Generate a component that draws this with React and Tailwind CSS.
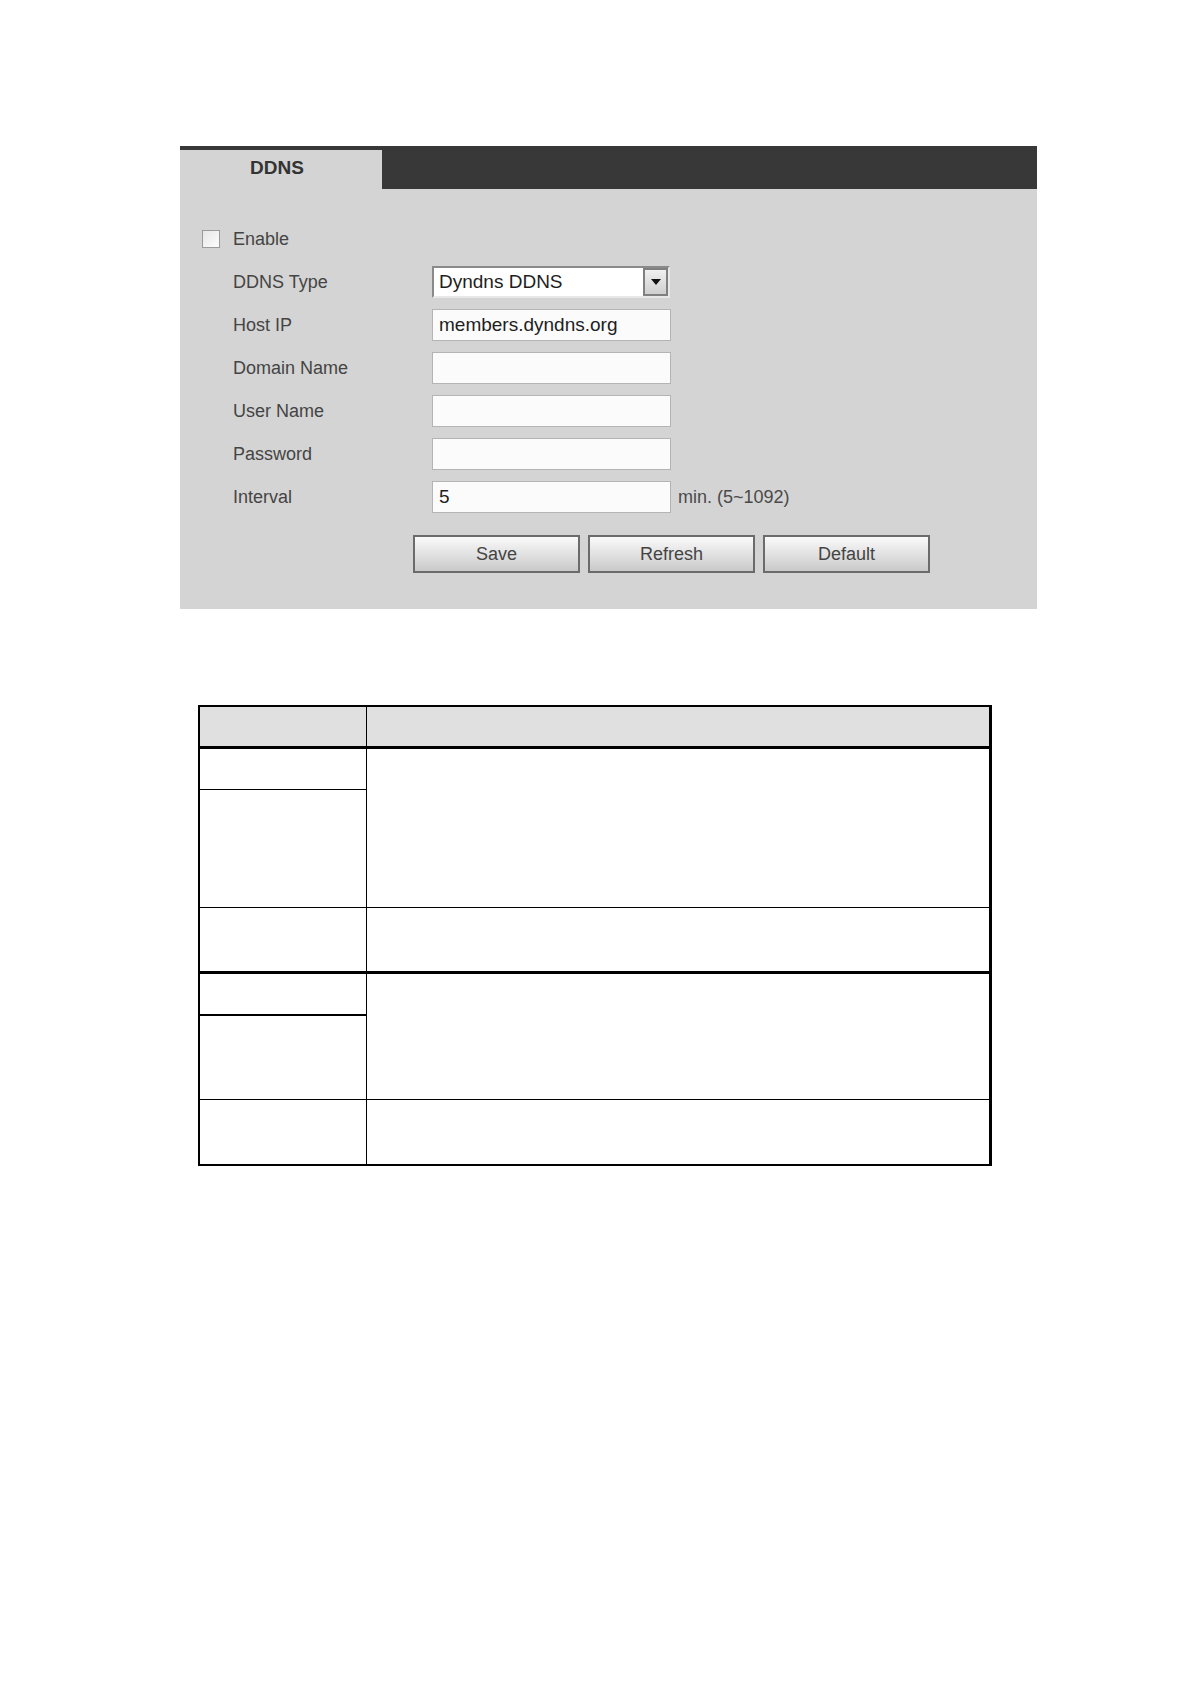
import React from 'react'

const FIELDS = [
  { label: 'Host IP', value: 'members.dyndns.org' },
  { label: 'Domain Name', value: '' },
  { label: 'User Name', value: '' },
  { label: 'Password', value: '' },
]

function Field({ value }) {
  return (
    <div className="w-[239px] h-[32px] bg-[#fbfbfb] border border-[#b4b4b4] flex items-center px-[6px] text-[19px] text-[#1e1e1e]">
      {value}
    </div>
  )
}

function Btn({ children }) {
  return (
    <div className="w-[167px] h-[38px] border-2 border-[#6b6b6b] bg-gradient-to-b from-[#fafafa] via-[#e2e2e2] to-[#c9c9c9] flex items-center justify-center text-[18px] text-[#444]">
      {children}
    </div>
  )
}

export default function App() {
  return (
    <div className="min-h-[1684px] bg-white pt-[146px]" style={{ fontFamily: '"Liberation Sans", Arial, sans-serif' }}>
      {/* settings panel */}
      <div className="ml-[180px] w-[857px] bg-[#d4d4d4] pb-[36px]">
        <div className="h-[43px] bg-[#383838] flex">
          <div className="w-[202px] mt-[4px] bg-[#d4d4d4] flex items-center justify-center pr-[8px] pb-[2px] text-[19px] font-bold text-[#333]">
            DDNS
          </div>
        </div>

        <div className="pt-[34px] flex flex-col gap-[11px]">
          <div className="h-[32px] flex items-center pl-[22px]">
            <div className="w-[18px] h-[18px] border border-[#9a9a9a] bg-gradient-to-br from-[#e6e6e6] to-[#fdfdfd]" />
            <span className="ml-[13px] text-[18px] text-[#444]">Enable</span>
          </div>

          <div className="h-[32px] flex items-center pl-[53px]">
            <span className="w-[199px] text-[18px] text-[#444]">DDNS Type</span>
            <div className="w-[238px] h-[32px] bg-white border-2 border-t-[#8a8a8a] border-l-[#8a8a8a] border-r-[#e8e8e8] border-b-[#e8e8e8] flex items-center">
              <span className="flex-1 pl-[5px] text-[19px] text-[#1e1e1e]">Dyndns DDNS</span>
              <div className="w-[25px] h-[28px] border-2 border-[#808080] bg-gradient-to-b from-[#f0f0f0] to-[#cfcfcf] flex items-center justify-center">
                <svg width="10" height="6" viewBox="0 0 10 6"><path d="M0 0h10L5 6z" fill="#111" /></svg>
              </div>
            </div>
          </div>

          {FIELDS.map(f => (
            <div key={f.label} className="h-[32px] flex items-center pl-[53px]">
              <span className="w-[199px] text-[18px] text-[#444]">{f.label}</span>
              <Field value={f.value} />
            </div>
          ))}

          <div className="h-[32px] flex items-center pl-[53px]">
            <span className="w-[199px] text-[18px] text-[#444]">Interval</span>
            <Field value="5" />
            <span className="ml-[7px] text-[18px] text-[#4a4a4a]">min. (5~1092)</span>
          </div>
        </div>

        <div className="mt-[22px] pl-[233px] flex gap-[8px]">
          <Btn>Save</Btn>
          <Btn>Refresh</Btn>
          <Btn>Default</Btn>
        </div>
      </div>

      {/* parameter table */}
      <div className="mt-[96px] ml-[198px] w-[794px] border-2 border-r-[3px] border-black grid grid-cols-[167px_1fr] grid-rows-[42px_41px_118px_66px_42px_84px_64px]">
        <div className="bg-[#e0e0e0] border-r border-b-[3px] border-black" />
        <div className="bg-[#e0e0e0] border-b-[3px] border-black" />

        <div className="border-r border-b border-black" />
        <div className="row-span-2 border-b border-black" />
        <div className="border-r border-b border-black" />

        <div className="border-r border-b-[3px] border-black" />
        <div className="border-b-[3px] border-black" />

        <div className="border-r border-b-2 border-black" />
        <div className="row-span-2 border-b border-black" />
        <div className="border-r border-b border-black" />

        <div className="border-r border-black" />
        <div />
      </div>
    </div>
  )
}
